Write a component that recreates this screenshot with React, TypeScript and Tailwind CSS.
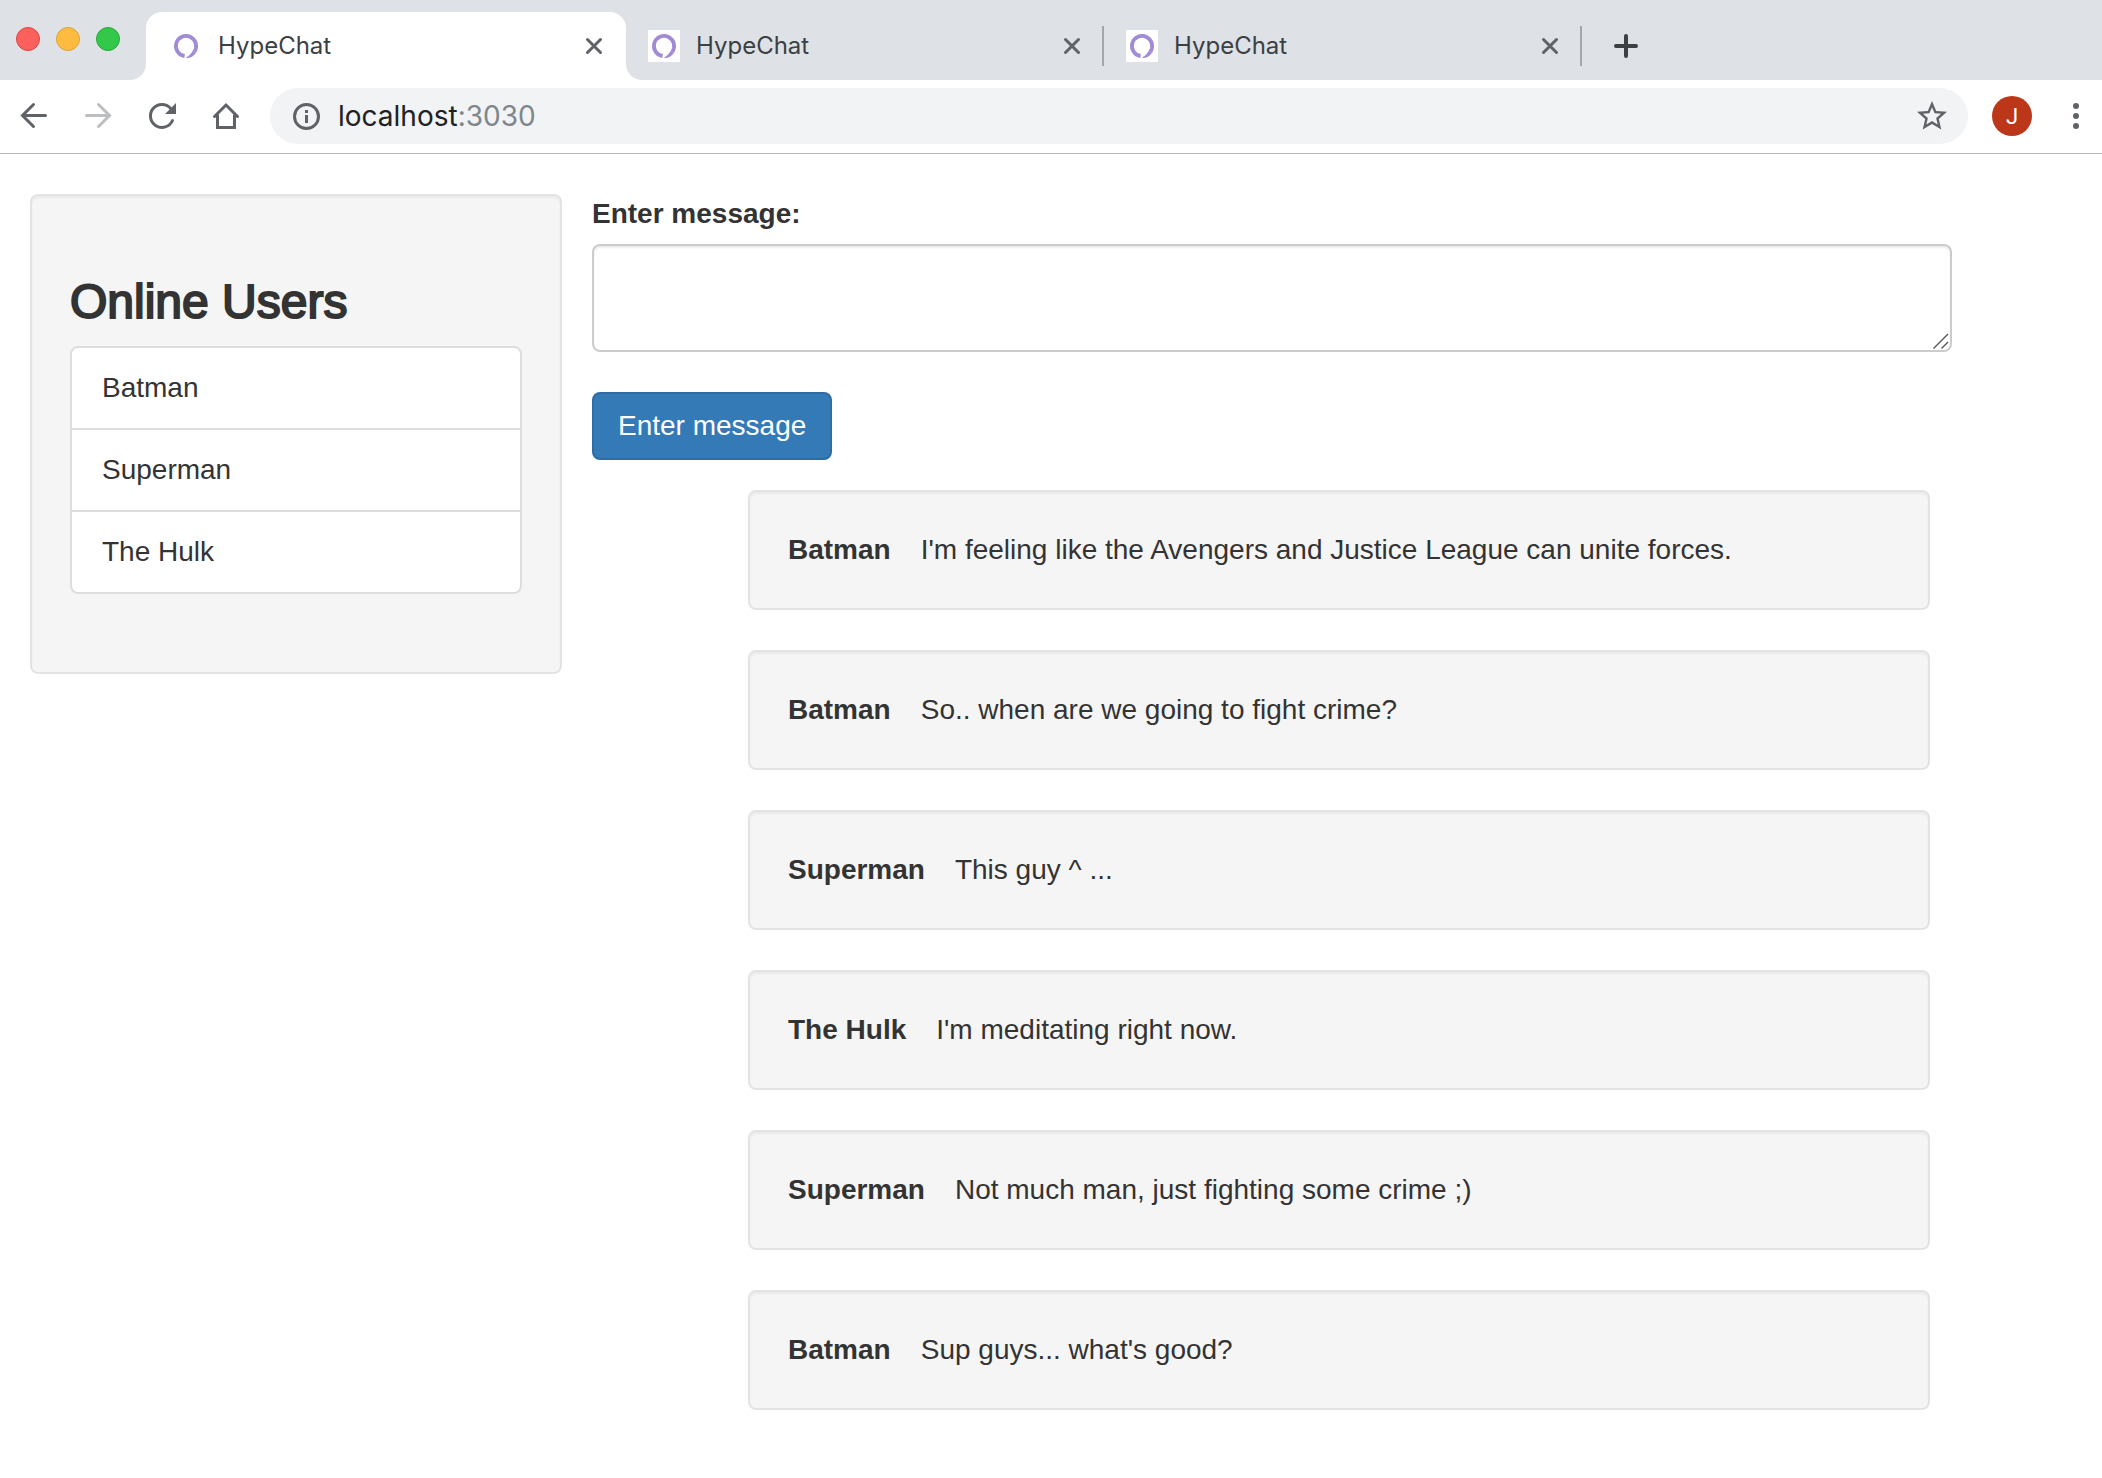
import React from "react";

const uiFont = "font-['Inter',sans-serif]";

function Favicon({ boxed }: { boxed?: boolean }) {
  return (
    <svg viewBox="0 0 32 32" className="size-8 shrink-0" aria-hidden="true">
      {boxed && <rect width="32" height="32" fill="#fff" />}
      <path d="M14.600 26A10.100 10.100 0 1 1 24.300 21.800" fill="none" stroke="#a28bd6" strokeWidth="3.800" />
      <path d="M22.700 20.800L25.900 22.900C23.900 26 20.500 28 17 28L16 27.400C19 26 21.300 23.800 22.700 20.800z" fill="#a28bd6" />
    </svg>
  );
}

function CloseButton() {
  return (
    <button type="button" aria-label="Close tab" className="flex size-6 shrink-0 items-center justify-center">
      <svg viewBox="0 0 24 24" className="size-6" fill="none" stroke="#5f6368" strokeWidth="3" strokeLinecap="round">
        <path d="M5.500 5.500l13 13M18.500 5.500l-13 13" />
      </svg>
    </button>
  );
}

function TabContent({ boxed }: { boxed?: boolean }) {
  return (
    <>
      <Favicon boxed={boxed} />
      <span className="ml-4 flex-1 text-left text-2xl text-[#3c4043]">HypeChat</span>
      <CloseButton />
    </>
  );
}

function InactiveTab() {
  return (
    <div className="flex h-20 w-[478px] items-center pt-3 pl-[22px]">
      <TabContent boxed />
      <div className="ml-[18px] h-10 w-0.5 bg-[#a3a6aa]" />
    </div>
  );
}

function TabStrip() {
  return (
    <div className="flex h-20 bg-white">
      <div className="flex w-[146px] shrink-0 gap-4 rounded-br-2xl bg-[#dee1e6] pt-[27px] pl-4">
        <span className="size-6 rounded-full border border-[#e0443e] bg-[#fc605c]" />
        <span className="size-6 rounded-full border border-[#dea03a] bg-[#fdbc40]" />
        <span className="size-6 rounded-full border border-[#25a833] bg-[#34c84a]" />
      </div>
      <div className="w-[480px] shrink-0 bg-[#dee1e6]">
        <div className="flex h-20 items-end">
          <div className="flex h-[68px] w-full items-center rounded-t-2xl bg-white pr-5 pl-6">
            <TabContent />
          </div>
        </div>
      </div>
      <div className="flex flex-1 rounded-bl-2xl bg-[#dee1e6]">
        <InactiveTab />
        <InactiveTab />
        <button type="button" aria-label="New tab" className="ml-7 flex h-20 w-8 items-center justify-center pt-3">
          <svg viewBox="0 0 32 32" className="size-8" fill="none" stroke="#3c4043" strokeWidth="4" strokeLinecap="round">
            <path d="M16 6v20M6 16h20" />
          </svg>
        </button>
      </div>
    </div>
  );
}

function NavButton({ label, faded, children }: { label: string; faded?: boolean; children: React.ReactNode }) {
  return (
    <button type="button" aria-label={label} className={faded ? "size-8 text-[#bdbec0]" : "size-8 text-[#5f6368]"}>
      <svg
        viewBox="0 0 32 32"
        className="size-8"
        fill="none"
        stroke="currentColor"
        strokeWidth="3"
        strokeLinecap="round"
        strokeLinejoin="round"
      >
        {children}
      </svg>
    </button>
  );
}

function Toolbar() {
  return (
    <div className="flex items-center border-b border-[#b6b6b8] bg-white pt-2 pr-[10px] pb-[9px] pl-[18px]">
      <div className="flex gap-8">
        <NavButton label="Back">
          <path d="M27.500 15.500H5M15.500 4.500l-11 11 11 11" strokeLinejoin="miter" />
        </NavButton>
        <NavButton label="Forward" faded>
          <path d="M4.500 15.500H27M16.500 4.500l11 11-11 11" strokeLinejoin="miter" />
        </NavButton>
        <NavButton label="Reload">
          <path d="M26.500 20.500A11.500 11.500 0 1 1 24.500 8.200" />
          <path d="M30 3v11H19z" fill="currentColor" stroke="none" />
        </NavButton>
        <NavButton label="Home">
          <path d="M4.500 16.500L16 5l11.500 11.500M7.500 15v12.500h17V15" strokeLinejoin="miter" />
        </NavButton>
      </div>
      <div className="ml-7 flex h-14 flex-1 items-center rounded-full bg-[#f1f3f4] pr-[18px] pl-5">
        <svg viewBox="0 0 32 32" className="size-8 shrink-0" aria-hidden="true">
          <circle cx="16.500" cy="16.500" r="12" fill="none" stroke="#5f6368" strokeWidth="3" />
          <path d="M15 10h3v3h-3zM15 15h3v8h-3z" fill="#5f6368" />
        </svg>
        <div
          role="textbox"
          tabIndex={0}
          aria-label="Address"
          className="ml-4 flex-1 text-[28px] leading-10 text-[#202124]"
        >
          localhost<span className="text-[#80868b]">:3030</span>
        </div>
        <button type="button" aria-label="Bookmark this page" className="size-9">
          <svg viewBox="0 0 24 24" className="size-9" fill="#5f6368">
            <path d="M22 9.240l-7.190-.62L12 2 9.190 8.630 2 9.240l5.460 4.730L5.820 21 12 17.270 18.180 21l-1.630-7.030L22 9.240zM12 15.400l-3.760 2.270 1-4.280-3.320-2.880 4.380-.38L12 6.100l1.710 4.040 4.380.38-3.320 2.880 1 4.280L12 15.400z" />
          </svg>
        </button>
      </div>
      <button
        type="button"
        aria-label="Profile"
        className="ml-6 flex size-10 items-center justify-center rounded-full bg-[#bc3619] font-['Roboto',sans-serif] text-[22px] text-white"
      >
        J
      </button>
      <button type="button" aria-label="Menu" className="ml-7 size-8">
        <svg viewBox="0 0 32 32" className="size-8" fill="#5f6368">
          <circle cx="16" cy="6" r="3" />
          <circle cx="16" cy="16" r="3" />
          <circle cx="16" cy="26" r="3" />
        </svg>
      </button>
    </div>
  );
}

const users = ["Batman", "Superman", "The Hulk"];

const messages = [
  { from: "Batman", text: "I'm feeling like the Avengers and Justice League can unite forces." },
  { from: "Batman", text: "So.. when are we going to fight crime?" },
  { from: "Superman", text: "This guy ^ ..." },
  { from: "The Hulk", text: "I'm meditating right now." },
  { from: "Superman", text: "Not much man, just fighting some crime ;)" },
  { from: "Batman", text: "Sup guys... what's good?" },
];

const well = "rounded-lg border-2 border-[#e3e3e3] bg-[#f5f5f5] p-[38px] shadow-[inset_0_2px_2px_rgba(0,0,0,0.05)]";

export default function App() {
  return (
    <div className="min-h-screen bg-white">
      <header className={uiFont}>
        <TabStrip />
        <Toolbar />
      </header>
      <main className="grid grid-cols-[532fr_1360fr] items-start gap-x-[30px] pt-10 pr-[150px] pl-[30px] font-['Liberation_Sans',Arial,sans-serif] text-[28px] leading-10 text-[#333]">
        <aside className={well}>
          <h3 className="mt-10 mb-4 text-5xl leading-[56px] font-normal [-webkit-text-stroke:2px_#333]">
            Online Users
          </h3>
          <ul className="mb-10 divide-y-2 divide-[#ddd] rounded-lg border-2 border-[#ddd] bg-white">
            {users.map((user) => (
              <li key={user} className="px-[30px] py-5">
                {user}
              </li>
            ))}
          </ul>
        </aside>
        <section>
          <form onSubmit={(event) => event.preventDefault()}>
            <label htmlFor="message" className="mb-2.5 block font-bold">
              Enter message:
            </label>
            <div className="relative">
              <textarea
                id="message"
                className="block h-[108px] w-full resize-none rounded-lg border-2 border-[#ccc] bg-white px-6 py-3 shadow-[inset_0_2px_2px_rgba(0,0,0,0.075)]"
              />
              <svg
                viewBox="0 0 16 16"
                className="pointer-events-none absolute right-[3px] bottom-[3px] size-4"
                fill="none"
                stroke="#555"
                strokeWidth="1.400"
                aria-hidden="true"
              >
                <path d="M.5 15.500l14.500-14.500M8.500 15.500L15 9" />
              </svg>
            </div>
            <button
              type="submit"
              className="mt-10 block rounded-lg border-2 border-[#2e6da4] bg-[#337ab7] px-6 py-3 text-white"
            >
              Enter message
            </button>
          </form>
          <ul className="mt-[30px] mr-[22px] ml-[156px] flex flex-col gap-10">
            {messages.map((message) => (
              <li key={message.text} className={well}>
                <strong className="mr-[30px] font-bold">{message.from}</strong>
                {message.text}
              </li>
            ))}
          </ul>
        </section>
      </main>
    </div>
  );
}
